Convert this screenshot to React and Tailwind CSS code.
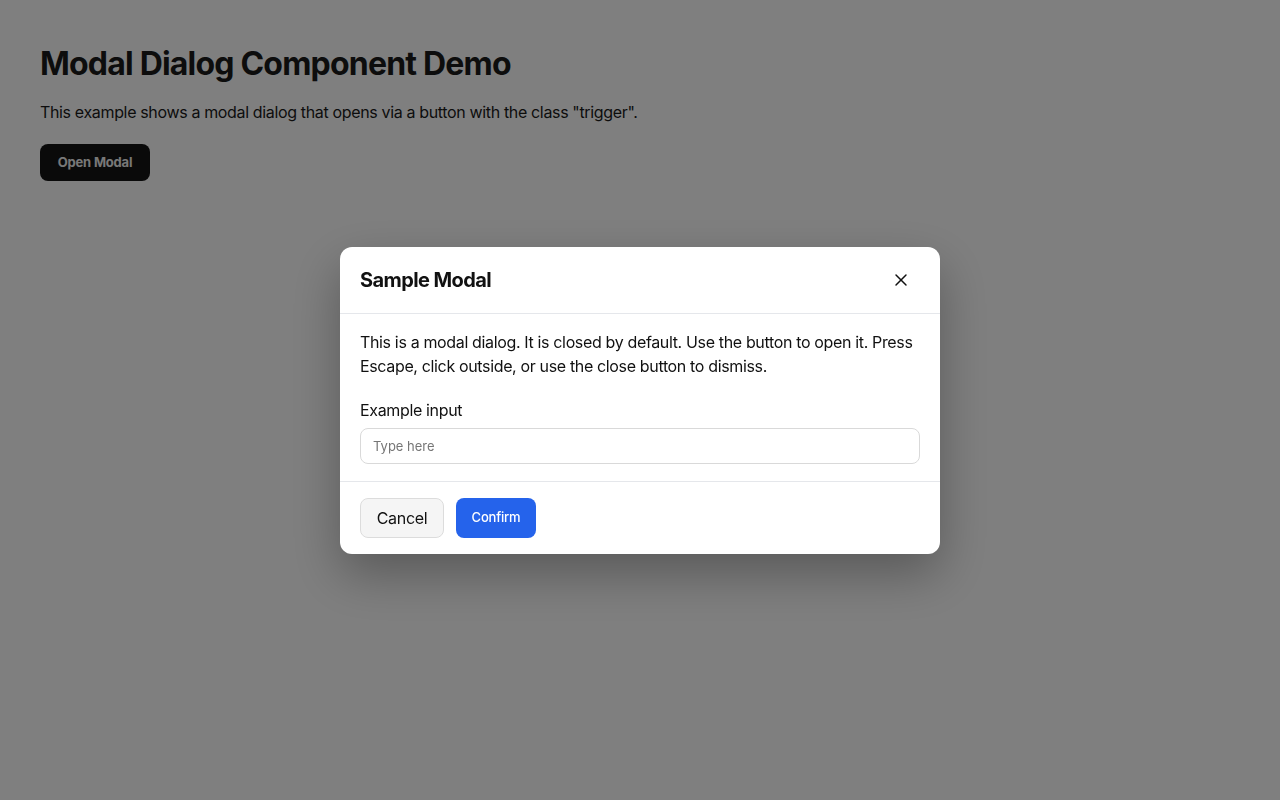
import React, { useState } from "react";
import { X } from "lucide-react";

const font = { fontFamily: "Inter, 'Liberation Sans', sans-serif" };

function Modal({ onClose }) {
    return (
        <div className="fixed inset-0 z-10 flex items-start justify-center bg-black/50 pt-[247px]">
            <div className="w-[600px] overflow-hidden rounded-xl bg-white shadow-[0_20px_50px_rgba(0,0,0,0.3)]">
                <div className="flex h-[67px] items-center justify-between border-b border-gray-200 px-5">
                    <h2 className="text-[20px] font-bold tracking-[-0.6px] text-[#111]">
                        Sample Modal
                    </h2>
                    <button
                        onClick={onClose}
                        className="mr-[3px] flex h-8 w-8 items-center justify-center rounded-md text-[#111]"
                        aria-label="Close"
                    >
                        <X size={20} strokeWidth={1.75} />
                    </button>
                </div>
                <div className="px-5 pt-4 pb-[17px] tracking-[-0.35px]">
                    <p className="text-[16px] leading-6 text-[#111]">
                        This is a modal dialog. It is closed by default. Use the button to open
                        it. Press Escape, click outside, or use the close button to dismiss.
                    </p>
                    <label className="mt-5 block text-[16px] leading-6 text-[#111]">
                        Example input
                    </label>
                    <input
                        type="text"
                        placeholder="Type here"
                        className="mt-[6px] h-9 w-full rounded-lg border border-[#d9d9d9] px-3 text-[13px] tracking-normal placeholder:text-[#767676] outline-none"
                    />
                </div>
                <div className="flex items-center gap-3 border-t border-gray-200 px-5 py-4">
                    <button className="h-10 w-[84px] rounded-lg border border-[#dcdcdc] bg-[#f5f5f5] text-[16px] tracking-[-0.3px] text-[#111]">
                        Cancel
                    </button>
                    <button className="h-10 w-20 rounded-lg bg-[#2563eb] text-[13px] font-medium tracking-[-0.2px] text-white">
                        Confirm
                    </button>
                </div>
            </div>
        </div>
    );
}

export default function App() {
    const [open, setOpen] = useState(true);

    return (
        <div className="min-h-screen bg-white px-10 pt-10 text-[#1a1a1a]" style={font}>
            <h1 className="text-[32px] font-bold leading-[48px] tracking-[-0.8px]">
                Modal Dialog Component Demo
            </h1>
            <p className="mt-[12px] text-[16px] leading-6 tracking-[-0.35px]">
                This example shows a modal dialog that opens via a button with the class
                "trigger".
            </p>
            <button
                onClick={() => setOpen(true)}
                className="trigger mt-[20px] h-[37px] w-[110px] rounded-lg bg-[#141414] text-[13px] font-bold tracking-[-0.2px] text-[#f0f0f0]"
            >
                Open Modal
            </button>
            {open && <Modal onClose={() => setOpen(false)} />}
        </div>
    );
}
